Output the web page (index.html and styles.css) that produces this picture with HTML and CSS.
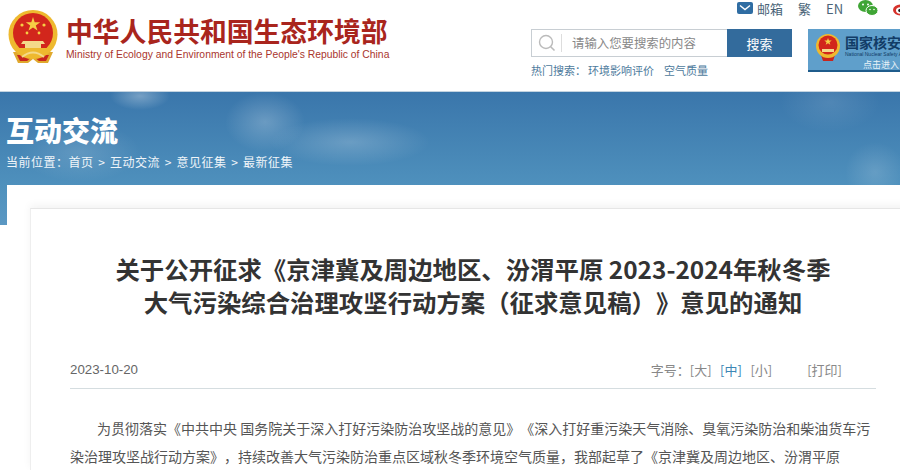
FILE: index.html
```html
<!DOCTYPE html>
<html lang="zh-CN">

<head>
  <meta charset="UTF-8" />
  <title>关于公开征求意见的通知</title>
  <link rel="stylesheet" href="styles.css">
</head>

<body>
  <header class="header">
    <a class="logo">
      <svg class="emblem" viewBox="0 0 50 54" width="50" height="54">
        <path d="M5 42 L10 53 H20 L25 49 L30 53 H40 L45 42 Z" fill="#e0a92e" />
        <path d="M9 45 H41 L38 51 H31 L25 46 L19 51 H12 Z" fill="#c8251d" />
        <circle cx="25" cy="24.500" r="24.500" fill="#eeb92f" />
        <circle cx="25" cy="23" r="20" fill="#d2261c" />
        <path d="M25 7 l1.700 5.200 h5.500 l-4.400 3.200 1.700 5.200 -4.500 -3.200 -4.500 3.200 1.700 -5.200 -4.400 -3.200 h5.500 z" fill="#f6cf45" />
        <circle cx="14" cy="15" r="1.600" fill="#f6cf45" />
        <circle cx="36" cy="15" r="1.600" fill="#f6cf45" />
        <circle cx="19" cy="23" r="1.400" fill="#f6cf45" />
        <circle cx="31" cy="23" r="1.400" fill="#f6cf45" />
        <path d="M15 31 H35 L37 34 H33 V38 H17 V34 H13 Z" fill="#f4d98a" />
        <path d="M8 38 H42 L38 43 H12 Z" fill="#eeb92f" />
        <path d="M14 47 Q25 38 36 47" fill="none" stroke="#f4d98a" stroke-width="2" />
      </svg>
      <span class="logo-text">
        <span class="logo-cn">中华人民共和国生态环境部</span>
        <span class="logo-en">Ministry of Ecology and Environment of the People's Republic of China</span>
      </span>
    </a>
    <div class="header-right">
      <div class="tools">
        <span class="tool tool-mail">
          <svg viewBox="0 0 16 12" width="16" height="12">
            <rect width="16" height="12" rx="2" fill="#2f6da3" />
            <path d="M3 3.500 L8 7.500 L13 3.500" fill="none" stroke="#fff" stroke-width="1.400" />
          </svg>
          邮箱
        </span>
        <span class="tool">繁</span>
        <span class="tool">EN</span>
        <svg class="wechat" viewBox="0 0 20 16" width="20" height="16">
          <ellipse cx="7.500" cy="6" rx="7.500" ry="6" fill="#3fa535" />
          <ellipse cx="14" cy="10.500" rx="6" ry="5" fill="#3fa535" stroke="#fff" stroke-width="1" />
          <circle cx="5" cy="4.500" r="1" fill="#fff" />
          <circle cx="10" cy="4.500" r="1" fill="#fff" />
          <circle cx="12" cy="9.500" r=".8" fill="#fff" />
          <circle cx="16" cy="9.500" r=".8" fill="#fff" />
        </svg>
        <svg class="weibo" viewBox="0 0 18 16" width="18" height="16">
          <ellipse cx="8" cy="10" rx="8" ry="5.500" fill="#d6322c" />
          <ellipse cx="7.500" cy="10.500" rx="4.500" ry="3.200" fill="#fff" />
          <circle cx="7" cy="10.500" r="1.800" fill="#222" />
          <path d="M11 3 Q16 2 16 7" fill="none" stroke="#e8962e" stroke-width="1.500" />
        </svg>
      </div>
      <div class="search-row">
        <div class="search-col">
          <div class="search">
            <div class="search-box">
              <svg class="search-icon" viewBox="0 0 18 18" width="18" height="18">
                <circle cx="8" cy="8" r="6.500" fill="none" stroke="#bbb" stroke-width="1.400" />
                <path d="M12.700 12.700 L16.500 16.500" stroke="#bbb" stroke-width="1.600" />
              </svg>
              <span class="search-hint">请输入您要搜索的内容</span>
            </div>
            <button class="search-btn">搜索</button>
          </div>
          <div class="hot">
            <span>热门搜索：</span>
            <a>环境影响评价</a>
            <a>空气质量</a>
          </div>
        </div>
        <div class="nuclear">
          <svg class="nuclear-emblem" viewBox="0 0 24 28" width="24" height="28">
            <path d="M5 21 H19 L17 27 H7 Z" fill="#c8251d" />
            <circle cx="12" cy="12" r="12" fill="#eeb92f" />
            <circle cx="12" cy="11" r="9.500" fill="#d2261c" />
            <path d="M12 4 l1 2.600 h2.700 l-2.200 1.600 .8 2.600 -2.300 -1.600 -2.300 1.600 .8 -2.600 -2.200 -1.600 h2.700 z" fill="#f6cf45" />
            <path d="M6 15 H18 V18 H6 Z" fill="#f4d98a" />
          </svg>
          <div class="nuclear-text">
            <div class="nuclear-cn">国家核安全局</div>
            <div class="nuclear-en">National Nuclear Safety Administration</div>
            <div class="nuclear-go">点击进入</div>
          </div>
        </div>
      </div>
    </div>
  </header>

  <section class="banner">
    <h1>互动交流</h1>
    <div class="crumbs">当前位置：首页 &gt; 互动交流 &gt; 意见征集 &gt; 最新征集</div>
  </section>

  <main class="wrap">
    <article class="card">
      <h2>关于公开征求《京津冀及周边地区、汾渭平原 2023-2024年秋冬季<br>大气污染综合治理攻坚行动方案（征求意见稿）》意见的通知</h2>
      <div class="meta">
        <span class="date">2023-10-20</span>
        <div class="meta-tools">
          <span class="size-label">字号：</span>
          <a>[大]</a>
          <a class="current">[中]</a>
          <a>[小]</a>
          <a class="print">[打印]</a>
        </div>
      </div>
      <p class="body-text">为贯彻落实《中共中央 国务院关于深入打好污染防治攻坚战的意见》《深入打好重污染天气消除、臭氧污染防治和柴油货车污染治理攻坚战行动方案》，持续改善大气污染防治重点区域秋冬季环境空气质量，我部起草了《京津冀及周边地区、汾渭平原</p>
    </article>
  </main>
</body>

</html>
```

FILE: styles.css
```css
html,
body {
  overflow: hidden;
}

body {
  margin: 0;
  width: 900px;
  height: 470px;
  background: #fff;
  font-family: "Noto Sans CJK SC", "Liberation Sans", sans-serif;
  color: #555;
  text-spacing-trim: space-all;
}

.header {
  display: flex;
  height: 91px;
  border-bottom: 1px solid #c3d3e0;
}

.logo {
  display: flex;
  width: 531px;
  flex: none;
  padding: 10px 0 0 8px;
  box-sizing: border-box;
  gap: 8px;
}

.logo-text {
  display: flex;
  flex-direction: column;
}

.logo-cn {
  font-size: 26.8px;
  line-height: 35px;
  margin-top: 3px;
  font-weight: 700;
  color: #a9251d;
  white-space: nowrap;
}

.logo-en {
  font-family: "Liberation Sans", sans-serif;
  font-size: 10.35px;
  line-height: 14px;
  color: #a9352d;
  white-space: nowrap;
}

.header-right {
  flex: none;
  width: 420px;
}

.tools {
  display: flex;
  align-items: center;
  height: 16px;
  padding-left: 206px;
  font-size: 13px;
  color: #4a6478;
}

.tool {
  display: flex;
  align-items: center;
  gap: 4px;
  margin-right: 15px;
  white-space: nowrap;
}

.wechat {
  margin-right: 15px;
}

.search-row {
  display: flex;
  gap: 16px;
  margin-top: 13px;
}

.search-col {
  width: 261px;
}

.search {
  display: flex;
  height: 28px;
}

.search-box {
  display: flex;
  align-items: center;
  width: 196px;
  box-sizing: border-box;
  border: 1px solid #c8ced3;
  border-right: none;
  padding-left: 6px;
}

.search-icon {
  flex: none;
  padding-right: 5px;
  border-right: 1px solid #ddd;
}

.search-hint {
  font-size: 12.4px;
  color: #888;
  margin-left: 10px;
  white-space: nowrap;
}

.search-btn {
  width: 65px;
  border: none;
  padding: 0;
  background: #336b9c;
  color: #fff;
  font-family: inherit;
  font-size: 13px;
}

.hot {
  display: flex;
  margin-top: 5px;
  font-size: 11px;
  line-height: 16px;
  color: #4d7a9c;
  white-space: nowrap;
}

.hot span {
  margin-right: 2px;
}

.hot a {
  margin-right: 10px;
}

.nuclear {
  display: flex;
  flex: none;
  width: 140px;
  height: 43px;
  box-sizing: border-box;
  border-bottom: 2px solid #1f5c8c;
  background: #5f9fcb;
  padding: 5px 0 0 8px;
  gap: 5px;
}

.nuclear-text {
  white-space: nowrap;
}

.nuclear-cn {
  font-size: 14px;
  line-height: 17px;
  font-weight: 700;
  color: #123c66;
}

.nuclear-en {
  font-family: "Liberation Sans", sans-serif;
  font-size: 5px;
  line-height: 6px;
  color: #123c66;
}

.nuclear-go {
  font-size: 9px;
  line-height: 13px;
  margin-top: 1px;
  color: #e8f2f8;
  padding-left: 18px;
}

.banner {
  height: 133px;
  padding-left: 6px;
  box-sizing: border-box;
  background:
    radial-gradient(ellipse 30px 14px at 140px 4px, rgba(255, 255, 255, .3), transparent),
    radial-gradient(ellipse 40px 30px at 265px 30px, rgba(255, 255, 255, .22), transparent),
    radial-gradient(ellipse 80px 24px at 350px 50px, rgba(255, 255, 255, .2), transparent),
    radial-gradient(ellipse 60px 30px at 80px 60px, rgba(255, 255, 255, .14), transparent),
    radial-gradient(ellipse 30px 30px at 875px 80px, rgba(255, 255, 255, .14), transparent),
    radial-gradient(ellipse 50px 30px at 830px 10px, rgba(255, 255, 255, .1), transparent),
    linear-gradient(#3a76ab, #4f91bd 95px, #5b98c3);
  color: #fff;
}

.banner h1 {
  margin: 0;
  padding-top: 20px;
  font-size: 28px;
  line-height: 37px;
  font-weight: 900;
}

.crumbs {
  margin-top: 4px;
  font-size: 12px;
  line-height: 18px;
  letter-spacing: .5px;
  word-spacing: 1.5px;
  color: #f0f5f9;
  white-space: nowrap;
}

.wrap {
  width: 1200px;
  height: 300px;
  margin: -40px 0 0 7px;
  padding: 23px 0 0 23px;
  background: #fff;
  box-sizing: border-box;
}

.card {
  width: 1000px;
  padding: 0 0 0 39px;
  box-sizing: border-box;
  border-top: 1px solid #e6e6e6;
  border-left: 1px solid #eee;
  box-shadow: 0 -3px 8px rgba(0, 0, 0, .05);
}

.card h2 {
  width: 806px;
  margin: 43px 0 0 0;
  text-align: center;
  font-size: 24.4px;
  line-height: 33px;
  font-weight: 700;
  color: #333;
}

.meta {
  display: flex;
  justify-content: space-between;
  align-items: center;
  width: 806px;
  height: 28px;
  margin-top: 37px;
  padding-bottom: 5px;
  border-bottom: 1px solid #d5dde0;
  font-size: 13px;
  color: #888;
}

.date {
  font-family: "Liberation Sans", sans-serif;
  font-size: 13.3px;
  color: #666;
}

.meta-tools {
  display: flex;
  padding-right: 34px;
}

.meta-tools a + a {
  margin-left: 8.5px;
}

.meta-tools .print {
  margin-left: 35px;
}

.current {
  color: #3c87b5;
}

.body-text {
  width: 806px;
  margin: 25px 0 0 0;
  font-size: 14px;
  line-height: 28px;
  text-indent: 27px;
  color: #555;
}
```
